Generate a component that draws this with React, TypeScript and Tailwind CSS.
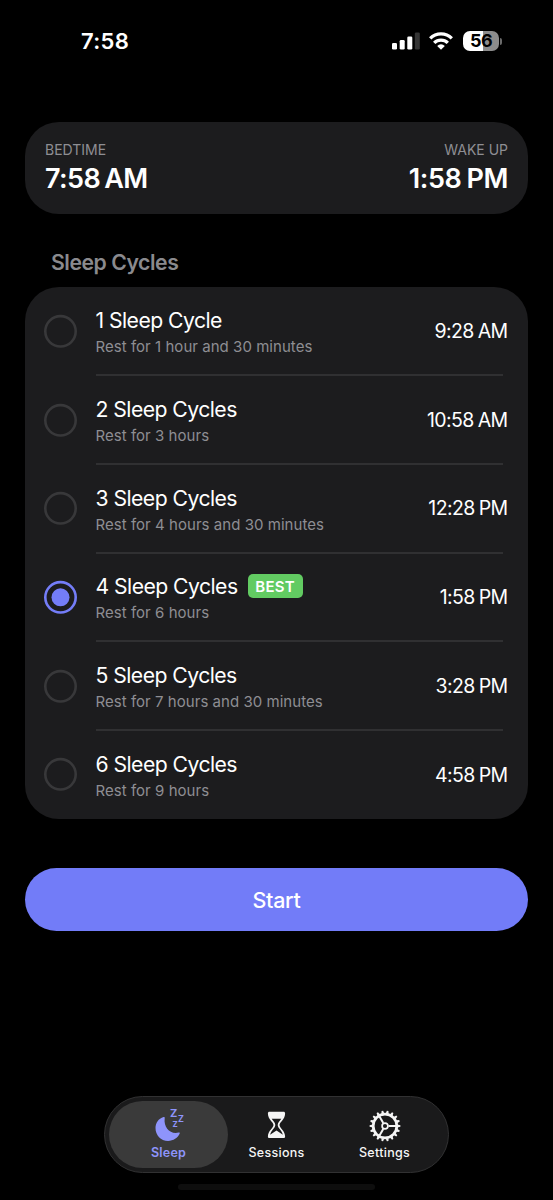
type Cycle = {
  title: string
  rest: string
  time: string
  period: string
  best?: boolean
}

const cycles: Cycle[] = [
  { title: '1 Sleep Cycle', rest: 'Rest for 1 hour and 30 minutes', time: '9:28', period: 'AM' },
  { title: '2 Sleep Cycles', rest: 'Rest for 3 hours', time: '10:58', period: 'AM' },
  { title: '3 Sleep Cycles', rest: 'Rest for 4 hours and 30 minutes', time: '12:28', period: 'PM' },
  { title: '4 Sleep Cycles', rest: 'Rest for 6 hours', time: '1:58', period: 'PM', best: true },
  { title: '5 Sleep Cycles', rest: 'Rest for 7 hours and 30 minutes', time: '3:28', period: 'PM' },
  { title: '6 Sleep Cycles', rest: 'Rest for 9 hours', time: '4:58', period: 'PM' },
]

const selected = 3

function StatusBar() {
  return (
    <header className="flex h-[82px] items-center justify-between pl-[81px] pr-[51px]">
      <span className="text-[22px] font-semibold leading-none tracking-[0.3px]">7:58</span>
      <div className="flex items-center">
        <svg width="28" height="18" viewBox="0 0 28 18" fill="#fff">
          <rect x="0" y="11" width="5" height="6.5" rx="1.3" />
          <rect x="7.7" y="8" width="5" height="9.5" rx="1.3" />
          <rect x="15.3" y="4.5" width="5" height="13" rx="1.3" />
          <rect x="22.8" y="0.5" width="5" height="17" rx="1.3" fill="#353535" />
        </svg>
        <svg className="ml-[9px]" width="24" height="18" viewBox="0 0 24 18" fill="none" stroke="#fff" strokeWidth="3.3">
          <path d="M1.2 6.4a15.3 15.3 0 0 1 21.6 0" />
          <path d="M5.2 10.9a9.6 9.6 0 0 1 13.6 0" />
          <path d="M12 17.8l-3.8-3.9a5.4 5.4 0 0 1 7.600 0z" fill="#fff" stroke="none" />
        </svg>
        <div className="ml-[10px] flex h-[20px] w-[36px] items-center justify-center rounded-[7px] bg-linear-to-r from-white from-56% to-[#8c8c8c] to-56%">
          <span className="text-[18px] font-bold leading-none tracking-[-0.5px] text-black">56</span>
        </div>
        <div className="ml-px h-[7px] w-[2px] rounded-r-full bg-[#6a6a6a]" />
      </div>
    </header>
  )
}

function Radio({ checked }: { checked: boolean }) {
  return (
    <svg width="34" height="34" viewBox="-16.5 -17.3 34 34" fill="none">
      <circle r="15.2" stroke={checked ? '#747df8' : '#38383a'} strokeWidth="2.6" />
      {checked && <circle r="9" fill="#747df8" />}
    </svg>
  )
}

function CycleRow({ cycle, checked, last }: { cycle: Cycle; checked: boolean; last: boolean }) {
  return (
    <div className="flex h-[88.7px] pl-[19px]">
      <div className="mt-[27px] w-[51.5px] shrink-0">
        <Radio checked={checked} />
      </div>
      <div className="relative flex grow items-center justify-between pr-[21px]">
        <div className="pt-[5px]">
          <div className="flex h-[26px] items-center gap-[10px]">
            <span className="text-[21.2px] leading-[26px] tracking-[-0.55px]">{cycle.title}</span>
            {cycle.best && (
              <span className="flex h-[24px] w-[55px] items-center justify-center rounded-[5px] bg-[#62cb62] text-[15px] font-semibold leading-none tracking-[0.2px]">
                BEST
              </span>
            )}
          </div>
          <p className="text-[15px] leading-[27px] tracking-[0.04px] text-[#8e8e93]">{cycle.rest}</p>
        </div>
        <span className="flex gap-[4px] pt-[1px] text-[19.5px] leading-none tracking-[-0.6px]">
          <span>{cycle.time}</span>
          <span className="-mr-[0.6px]">{cycle.period}</span>
        </span>
        {!last && <div className="absolute -bottom-[0.5px] left-0 right-[25px] h-[2px] bg-[#303032]" />}
      </div>
    </div>
  )
}

function SleepIcon() {
  return (
    <svg width="32" height="34" viewBox="-1 0 32 34" fill="#8e94fb" className="overflow-visible">
      <path d="M9.6 9C4.4 10.6 1.5 15 1.5 20C1.5 27.300 6.800 32.900 14.100 32.900C19.200 32.900 24 30.100 25.700 25.600C26 24.700 25.500 24.400 24.700 24.600C16.500 26.800 9.400 19.800 10.700 10.300C10.800 9.400 10.600 8.700 9.600 9Z" />
      <g fontFamily="Inter, sans-serif" fontWeight="700">
        <text x="16" y="8.800" fontSize="11">Z</text>
        <text x="24" y="14" fontSize="8.800">Z</text>
        <text x="18.500" y="19" fontSize="7.800">Z</text>
      </g>
    </svg>
  )
}

function HourglassIcon() {
  return (
    <svg width="20" height="28" viewBox="0.5 0 20 28">
      <path
        d="M3 .8h14c1 0 1.600.6 1.600 1.600C18.600 8.300 13 11 13 14s5.600 5.600 5.600 11.500c0 1-.6 1.600-1.600 1.600H3c-1 0-1.600-.6-1.600-1.600C1.400 19.600 7 17 7 14S1.400 8.300 1.400 2.400C1.400 1.400 2 .8 3 .8z"
        fill="#f5f5f5"
      />
      <path d="M5.200 7.800h9.600c-1.300 2.100-3.600 3.700-3.600 6.200 0 3 4.200 5.200 5.200 9.800L10 19.600l-6.400 4.200C4.600 19.200 8.800 17 8.800 14c0-2.500-2.300-4.100-3.600-6.200z" fill="#1a1a1b" />
    </svg>
  )
}

const teeth = Array.from({ length: 18 }, (_, i) => i * 20)

function GearIcon() {
  return (
    <svg width="32" height="32" viewBox="-16 -16 32 32" fill="none" stroke="#f5f5f5">
      <circle r="11.8" strokeWidth="2.7" />
      {teeth.map((angle) => (
        <path key={angle} d="M12.4 -1.5L15.4 -.8V.8L12.4 1.5Z" fill="#f5f5f5" stroke="none" transform={`rotate(${angle})`} />
      ))}
      <circle r="2.9" strokeWidth="1.7" />
      {[0, 120, 240].map((angle) => (
        <path key={angle} d="M3.5 0H11" strokeWidth="2" transform={`rotate(${angle})`} />
      ))}
    </svg>
  )
}

function TabBar() {
  return (
    <nav className="ml-[104px] flex h-[77px] w-[345px] items-center rounded-full border border-[#313132] bg-[#1a1a1b] px-[4px] text-[12.5px] font-medium leading-none tracking-[0.3px]">
      <div className="flex h-[67px] w-[119px] flex-col items-center rounded-full bg-[#3a3a3a] pt-[7px] font-semibold tracking-[0.2px] text-[#8e94fb]">
        <SleepIcon />
        <span className="mt-[5px]">Sleep</span>
      </div>
      <div className="flex h-[67px] w-[97px] flex-col items-center pt-[10px] text-[#f5f5f5]">
        <HourglassIcon />
        <span className="mt-[8px]">Sessions</span>
      </div>
      <div className="flex h-[67px] w-[119px] flex-col items-center pt-[9px] text-[#f5f5f5]">
        <GearIcon />
        <span className="mt-[5px]">Settings</span>
      </div>
    </nav>
  )
}

export default function App() {
  return (
    <div className="h-[1200px] w-[553px] overflow-hidden bg-black font-['Inter',sans-serif] text-white">
      <StatusBar />

      <main className="px-[25px] pt-[40px]">
        {/* Bedtime / wake up summary */}
        <section className="flex h-[92px] justify-between rounded-[34px] bg-[#1c1c1e] px-[20px] pt-[20px]">
          <div>
            <p className="text-[14px] leading-[16px] text-[#8e8e93]">BEDTIME</p>
            <p className="mt-[4px] flex gap-[4px] text-[27px] font-semibold leading-[34px] tracking-[-0.6px]">
              <span>7:58</span>
              <span>AM</span>
            </p>
          </div>
          <div className="flex flex-col items-end">
            <p className="text-[14px] leading-[16px] text-[#8e8e93]">WAKE UP</p>
            <p className="mt-[4px] flex gap-[5px] text-[27px] font-semibold leading-[34px] tracking-[-0.4px]">
              <span>1:58</span>
              <span>PM</span>
            </p>
          </div>
        </section>

        <h2 className="mt-[34px] pl-[26px] text-[21.2px] font-semibold leading-[28px] tracking-[-0.45px] text-[#8a8a8e]">Sleep Cycles</h2>

        {/* Cycle picker */}
        <section className="mt-[11px] h-[532px] rounded-[34px] bg-[#1c1c1e]">
          {cycles.map((cycle, i) => (
            <CycleRow key={cycle.title} cycle={cycle} checked={i === selected} last={i === cycles.length - 1} />
          ))}
        </section>

        <button className="mt-[49px] flex h-[63px] w-full items-center justify-center rounded-full bg-[#727cf8] pt-px text-[21.5px] font-medium tracking-[-0.3px]">
          Start
        </button>
      </main>

      <div className="pt-[165px]">
        <TabBar />
        <div className="mx-auto mt-[11px] h-[6px] w-[197px] rounded-full bg-[#0e0e0e]" />
      </div>
    </div>
  )
}
